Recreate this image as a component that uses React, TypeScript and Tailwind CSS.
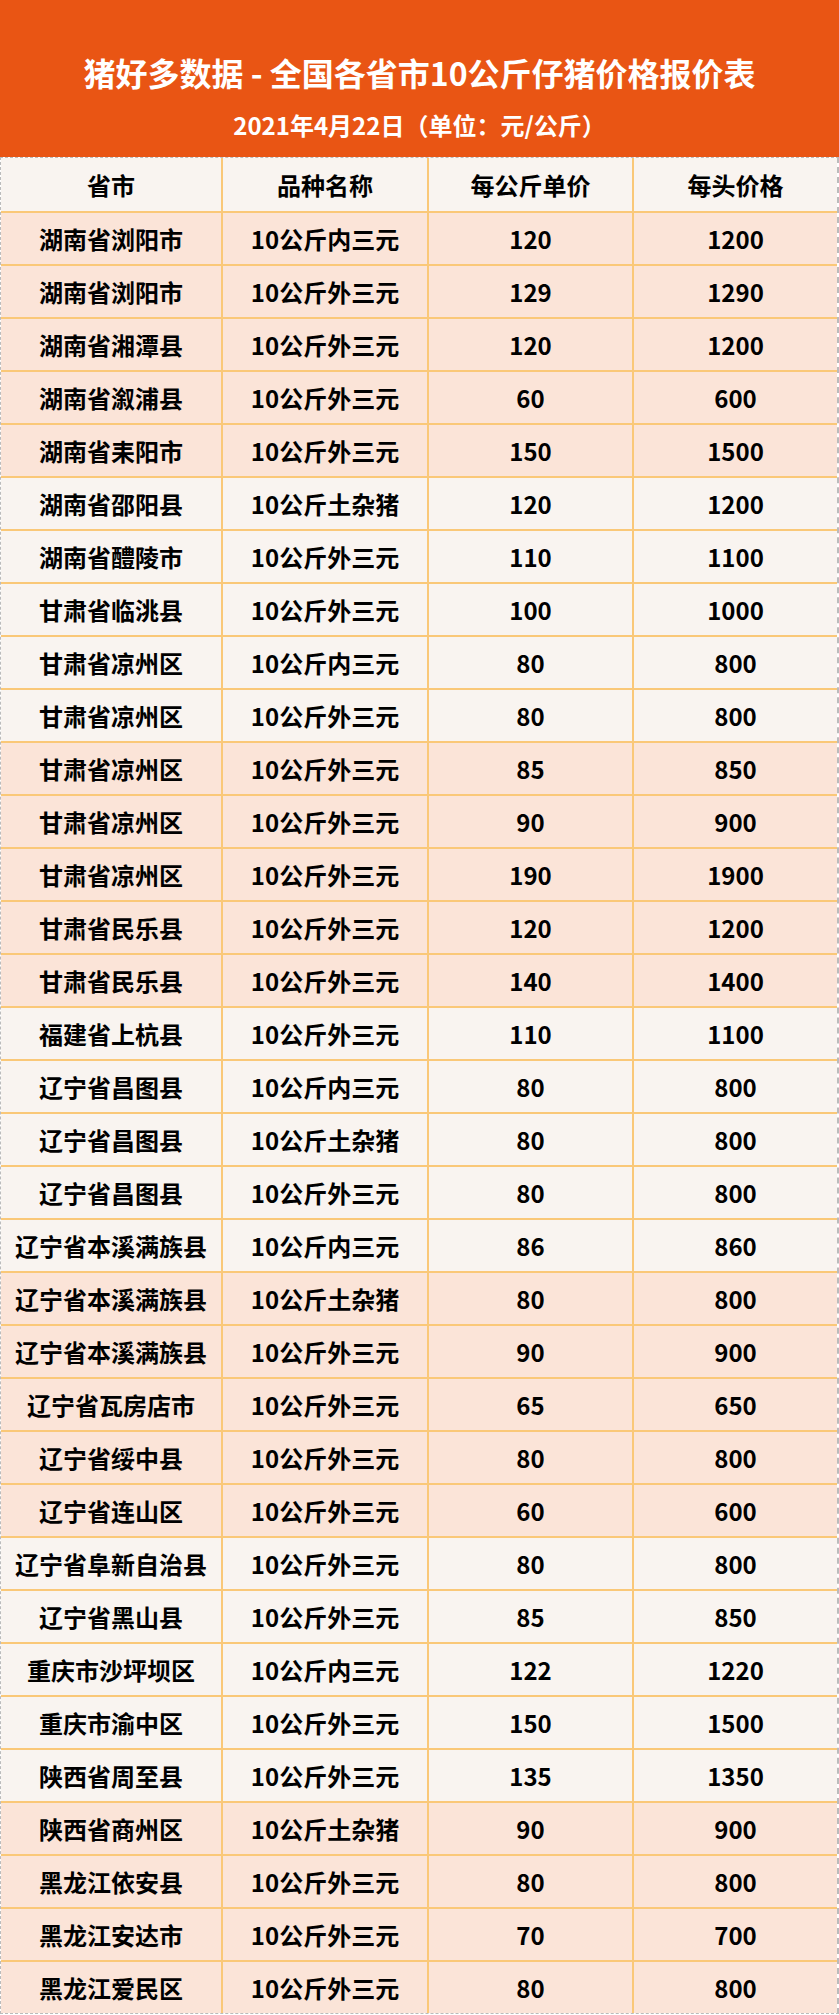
import React from 'react';

type Row = [string, string, number, number];

// 数据行：省市 / 品种名称 / 每公斤单价 / 每头价格
const rows: Row[] = [
  ['湖南省浏阳市', '10公斤内三元', 120, 1200],
  ['湖南省浏阳市', '10公斤外三元', 129, 1290],
  ['湖南省湘潭县', '10公斤外三元', 120, 1200],
  ['湖南省溆浦县', '10公斤外三元', 60, 600],
  ['湖南省耒阳市', '10公斤外三元', 150, 1500],
  ['湖南省邵阳县', '10公斤土杂猪', 120, 1200],
  ['湖南省醴陵市', '10公斤外三元', 110, 1100],
  ['甘肃省临洮县', '10公斤外三元', 100, 1000],
  ['甘肃省凉州区', '10公斤内三元', 80, 800],
  ['甘肃省凉州区', '10公斤外三元', 80, 800],
  ['甘肃省凉州区', '10公斤外三元', 85, 850],
  ['甘肃省凉州区', '10公斤外三元', 90, 900],
  ['甘肃省凉州区', '10公斤外三元', 190, 1900],
  ['甘肃省民乐县', '10公斤外三元', 120, 1200],
  ['甘肃省民乐县', '10公斤外三元', 140, 1400],
  ['福建省上杭县', '10公斤外三元', 110, 1100],
  ['辽宁省昌图县', '10公斤内三元', 80, 800],
  ['辽宁省昌图县', '10公斤土杂猪', 80, 800],
  ['辽宁省昌图县', '10公斤外三元', 80, 800],
  ['辽宁省本溪满族县', '10公斤内三元', 86, 860],
  ['辽宁省本溪满族县', '10公斤土杂猪', 80, 800],
  ['辽宁省本溪满族县', '10公斤外三元', 90, 900],
  ['辽宁省瓦房店市', '10公斤外三元', 65, 650],
  ['辽宁省绥中县', '10公斤外三元', 80, 800],
  ['辽宁省连山区', '10公斤外三元', 60, 600],
  ['辽宁省阜新自治县', '10公斤外三元', 80, 800],
  ['辽宁省黑山县', '10公斤外三元', 85, 850],
  ['重庆市沙坪坝区', '10公斤内三元', 122, 1220],
  ['重庆市渝中区', '10公斤外三元', 150, 1500],
  ['陕西省周至县', '10公斤外三元', 135, 1350],
  ['陕西省商州区', '10公斤土杂猪', 90, 900],
  ['黑龙江依安县', '10公斤外三元', 80, 800],
  ['黑龙江安达市', '10公斤外三元', 70, 700],
  ['黑龙江爱民区', '10公斤外三元', 80, 800],
];

const font = { fontFamily: '"Noto Sans CJK SC", "Noto Sans", sans-serif' };

const Cell: React.FC<{ children: React.ReactNode; last?: boolean }> = ({ children, last }) => (
  <div
    className={`flex items-center justify-center text-[24px] font-bold text-black ${
      last ? '' : 'border-r-2 border-[#fac878]'
    }`}
  >
    {children}
  </div>
);

const App: React.FC = () => {
  return (
    <div className="w-[839px] bg-white" style={font}>
      <div className="h-[157px] bg-[#e95514] flex flex-col items-center text-white font-bold">
        <div className="mt-[49px] text-[32px] leading-[46px]">猪好多数据 - 全国各省市10公斤仔猪价格报价表</div>
        <div className="mt-[12px] text-[24px] leading-[36px]">2021年4月22日（单位：元/公斤）</div>
      </div>
      <div className="border-t border-l border-b border-r-2 border-dashed border-[#bbbbbb]">
        <div className="grid grid-cols-[222px_206px_205px_1fr] h-[55px] border-b-2 border-[#fac878] bg-[#f9f4f0]">
          <Cell>省市</Cell>
          <Cell>品种名称</Cell>
          <Cell>每公斤单价</Cell>
          <Cell last>每头价格</Cell>
        </div>
        {rows.map((r, i) => {
          const peach = Math.floor(i / 5) % 2 === 0;
          const isLast = i === rows.length - 1;
          return (
            <div
              key={i}
              className={`grid grid-cols-[222px_206px_205px_1fr] ${
                isLast ? 'h-[51px]' : 'h-[53px] border-b-2 border-[#fac878]'
              } ${peach ? 'bg-[#fbe4d8]' : 'bg-[#f9f4f0]'}`}
            >
              <Cell>{r[0]}</Cell>
              <Cell>{r[1]}</Cell>
              <Cell>{r[2]}</Cell>
              <Cell last>{r[3]}</Cell>
            </div>
          );
        })}
      </div>
    </div>
  );
};

export default App;
